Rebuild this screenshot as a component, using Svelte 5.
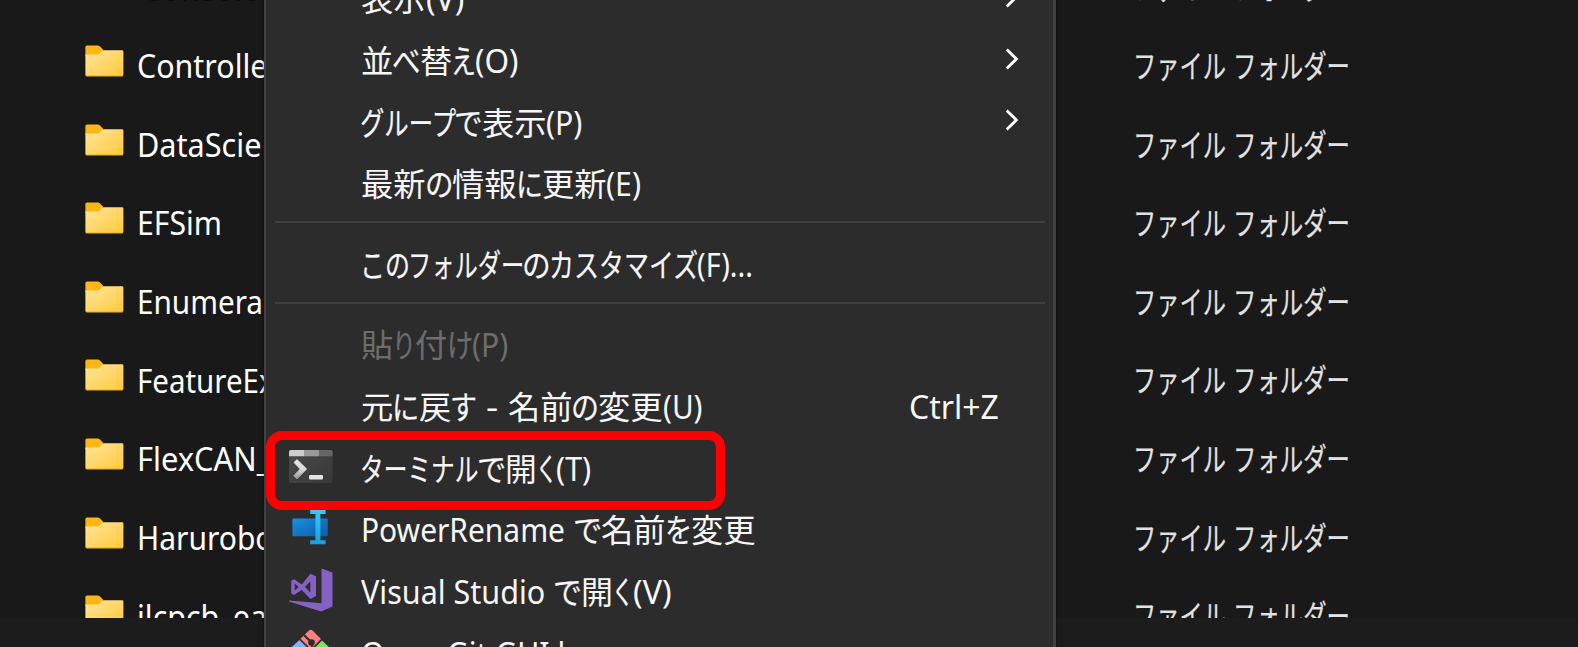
<script>
  const K = 32.3;
  const files = [
    ['Console', 118, true],
    ['Controlle', 130.5],
    ['DataScie', 124.5],
    ['EFSim', 85],
    ['Enumera', 126],
    ['FeatureEx', 137.5],
    ['FlexCAN_', 133.4],
    ['Harurobo', 136.5],
    ['jlcpcb_ea', 130]
  ];
  const kind = [['ファイル', 91], [' ', 8.8], ['フォルダー', 115]];
  const menu = [
    { label: [['表示', K * 2], ['(V)', 38.4]], sub: true },
    { label: [['並', K], ['べ', 26.5], ['替', K], ['え', 23], ['(O)', 43.5]], sub: true },
    { label: [['グループ', 94], ['で', 26.7], ['表示', K * 2], ['(P)', 36.4]], sub: true },
    { label: [['最新', K * 2], ['の', 26.5], ['情報', K * 2], ['に', 25], ['更新', K * 2], ['(E)', 35]] },
    { sep: true },
    { label: [['この', 48], ['フォルダー', 114.3], ['の', 26.7], ['カスタマイズ', 147.3], ['(F)...', 56]] },
    { sep: true },
    { label: [['貼', K], ['り', 22], ['付', K], ['け', 24.2], ['(P)', 36.2]], disabled: true },
    { label: [['元', K], ['に', 25.3], ['戻', K], ['す', 25], [' - ', 32], ['名前', K * 2], ['の', 26], ['変更', K * 2], ['(U)', 39.5]], key: 'Ctrl+Z' },
    { label: [['ターミナル', 116.5], ['で', 27.3], ['開', 31.8], ['く', 19.5], ['(T)', 35.2]], icon: 'terminal', marked: true },
    { label: [['PowerRename', 204], [' ', 8.8], ['で', 27.3], ['名前', K * 2], ['を', 25.3], ['変更', K * 2]], icon: 'rename' },
    { label: [['Visual Studio', 184.3], [' ', 9], ['で', 27], ['開', 32], ['く', 19.7], ['(V)', 38.7]], icon: 'vs' },
    { label: [['Open Git GUI here', 261]], icon: 'git' }
  ];

  // Fits a run of glyphs horizontally to its slot; kana fill theirs a little more,
  // since their side bearings are wide.
  function fit(node, width) {
    const natural = node.getBoundingClientRect().width;
    if (!natural) return;
    const text = node.textContent;
    const grow = /^[\u3040-\u30ff]+$/.test(text) ? 2 : 0;
    node.style.transform = `translateX(${-grow / 2}px) scaleX(${(width + grow) / natural})`;
    if (grow) node.style.webkitTextStroke = '0.2px';
  }
</script>

{#snippet run(parts)}
  <span class="runs">
    {#each parts as [text, width]}
      <span class="slot" style="width:{width}px"><span class="glyphs" use:fit={width}>{text}</span></span>
    {/each}
  </span>
{/snippet}

<div class="window">
  <div class="list">
    {#each files as [name, width, ghost]}
      <div class="row">
        <svg class="folder" viewBox="0 0 39 32" width="39" height="32">
          <defs>
            <linearGradient id="front" x1="0" y1="0" x2="1" y2="1">
              <stop offset="0" stop-color="#ffe69c" />
              <stop offset="1" stop-color="#ffc93a" />
            </linearGradient>
          </defs>
          <path d="M.4 2Q.4.4 2 .4H12.6Q14 .4 15 1.4L18.4 5V11H.4Z" fill="#fdb714" />
          <path d="M.4 9.6H12Q13.5 9.6 14.7 8.4L17 6.1Q18.1 5.2 19.4 5.2H37Q38.4 5.2 38.4 6.6V29.8Q38.4 31.2 37 31.2H1.8Q.4 31.2 .4 29.8Z" fill="url(#front)" />
          <path d="M.8 30.9H38" stroke="#e5a91c" stroke-width=".8" />
        </svg>
        <span class="name" class:ghost>{@render run([[name, width]])}</span>
        <span class="kind">{@render run(kind)}</span>
      </div>
    {/each}
  </div>
  <div class="status"></div>

  <div class="menu">
    {#each menu as item}
      {#if item.sep}
        <div class="sep"></div>
      {:else}
        <div class="item" class:disabled={item.disabled}>
          <span class="icon">
            {#if item.icon === 'terminal'}
              <svg class="terminal" width="44" height="34" viewBox="0 0 44 34">
                <defs>
                  <linearGradient id="tbody" x1="0" y1="0" x2="1" y2="1">
                    <stop offset="0" stop-color="#4a4a4a" /><stop offset="1" stop-color="#383838" />
                  </linearGradient>
                  <linearGradient id="chev" x1="0" y1="0" x2="0" y2="1">
                    <stop offset="0" stop-color="#e8e8e8" /><stop offset=".5" stop-color="#dcdcdc" /><stop offset="1" stop-color="#929292" />
                  </linearGradient>
                </defs>
                <rect width="43.6" height="33" rx="2" fill="url(#tbody)" />
                <path d="M0 6.3V2Q0 0 2 0H15V6.3Z" fill="#cdcdcd" />
                <path d="M15 0H30V6.3H15Z" fill="#999" />
                <path d="M30 0H41.6Q43.6 0 43.6 2V6.3H30Z" fill="#666" />
                <path d="M5 12.5L8 9.6L17.7 19L8 29L4.8 25.8L11.2 19Z" fill="url(#chev)" stroke="url(#chev)" stroke-width=".8" stroke-linejoin="round" />
                <rect x="20" y="25" width="14" height="4.6" rx="1" fill="#e4e4e4" />
              </svg>
            {:else if item.icon === 'rename'}
              <svg class="rename" width="44" height="36" viewBox="0 0 44 36">
                <defs>
                  <linearGradient id="pr" x1="0" y1="0" x2="1" y2="1">
                    <stop offset="0" stop-color="#1890df" /><stop offset="1" stop-color="#0e5ba8" />
                  </linearGradient>
                  <linearGradient id="cur" x1="0" y1="0" x2="0" y2="1">
                    <stop offset="0" stop-color="#3cc8f4" /><stop offset="1" stop-color="#139fe6" />
                  </linearGradient>
                </defs>
                <rect x="2.4" y="9.6" width="35.4" height="17.6" rx="1.3" fill="url(#pr)" />
                <path d="M20.2 .8H35.6V5H30.4V31.2H35.6V35.3H20.2V31.2H25.4V5H20.2Z" fill="url(#cur)" />
              </svg>
            {:else if item.icon === 'vs'}
              <svg width="44" height="44" viewBox="0 0 44 44" fill="#8661c5">
                <path d="M32.5 .5L43.5 4.5V38.5L32.2 43.5L0 33.4V32.6L32.5 35.2Z" />
                <path fill-rule="evenodd" d="M2.2 12.8L5 11.2L12.8 16.4L21.5 5.8L27 8.3V28L21.5 31L12.8 22L5 27L2.2 25.4ZM5.8 15.6V22.6L9.6 19.1ZM21.3 13.2L16 19L21.3 24.3Z" />
              </svg>
            {:else if item.icon === 'git'}
              <svg width="44" height="44" viewBox="0 0 44 44">
                <path d="M20 1.4Q21.8 0 23.5 1.4L32 10L22 20L11.5 9.8Z" fill="#ff8080" />
                <path d="M10.5 11L20.5 21L10 31L1 22Q0 20.5 1 19.5Z" fill="#80b3ff" />
                <path d="M33 11.5L42 20Q43 21.5 42 23L33 31L23.5 21Z" fill="#87de5f" />
                <path d="M15 6L23 14V25" fill="none" stroke="#2c2c2c" stroke-width="2" />
                <circle cx="22.5" cy="13.5" r="3.3" fill="#2c2c2c" />
              </svg>
            {/if}
          </span>
          <span class="label">{@render run(item.label)}</span>
          {#if item.key}<span class="key">{@render run([[item.key, 89.7]])}</span>{/if}
          {#if item.sub}
            <svg class="chevron" width="14" height="22" viewBox="0 0 14 22"><path d="M1.7 1.5L11.4 11L1.7 20.5" fill="none" stroke="#fff" stroke-width="2.8" /></svg>
          {/if}
          {#if item.marked}<div class="mark"></div>{/if}
        </div>
      {/if}
    {/each}
  </div>
</div>

<style>
  :global(body) { margin: 0; background: #191919; }
  .window {
    position: relative;
    width: 1578px;
    height: 647px;
    overflow: hidden;
    background: #191919;
    font: 32px/44px "Noto Sans", "Noto Sans CJK JP", sans-serif;
    color: #fff;
  }
  .list { height: 617.7px; overflow: hidden; }
  .status { height: 30px; background: #1c1c1c; }
  .row {
    display: flex;
    align-items: center;
    height: 78.64px;
    padding-left: 85px;
  }
  .row:first-child { margin-top: -57px; }
  .folder { flex: none; }
  .name { width: 999px; padding: 10.4px 0 0 13px; box-sizing: border-box; }
  .kind { color: #e2e2e2; padding-top: 10px; margin-left: 11px; }
  .ghost { color: #0c0c0c; padding: 13px 0 0 18px; }
  .runs { display: flex; height: 44px; }
  .slot { flex: none; height: 44px; white-space: pre; }
  .glyphs { display: inline-block; height: 44px; transform-origin: 0 50%; }
  .menu {
    position: absolute;
    left: 264px;
    top: -34px;
    width: 787px;
    height: 720px;
    border: solid #414141;
    border-width: 0 3px 0 2px;
    background: #2c2c2c;
    box-shadow: 0 0 4px #0008;
    color: #f7f7f7;
  }
  .item {
    position: relative;
    display: flex;
    align-items: center;
    height: 61.7px;
    padding: 0 34px 0 23px;
  }
  .disabled { color: #6d6d6d; }
  .icon { display: flex; width: 72px; flex: none; }
  .terminal { margin: 1px 0 0 .2px; }
  .rename { margin: -1px 0 0 .6px; }
  .label { flex: 1; padding-top: 5.1px; }
  .key { padding: 5.1px 20px 0 0; }
  .chevron { flex: none; }
  .sep { height: 2px; margin: 8.4px 8px 8.4px 9px; background: #3f3f3f; }
  .mark {
    position: absolute;
    left: 0;
    top: -4.5px;
    width: 441px;
    height: 61px;
    border: 9px solid #f00;
    border-radius: 16px;
    z-index: 1;
  }
</style>
